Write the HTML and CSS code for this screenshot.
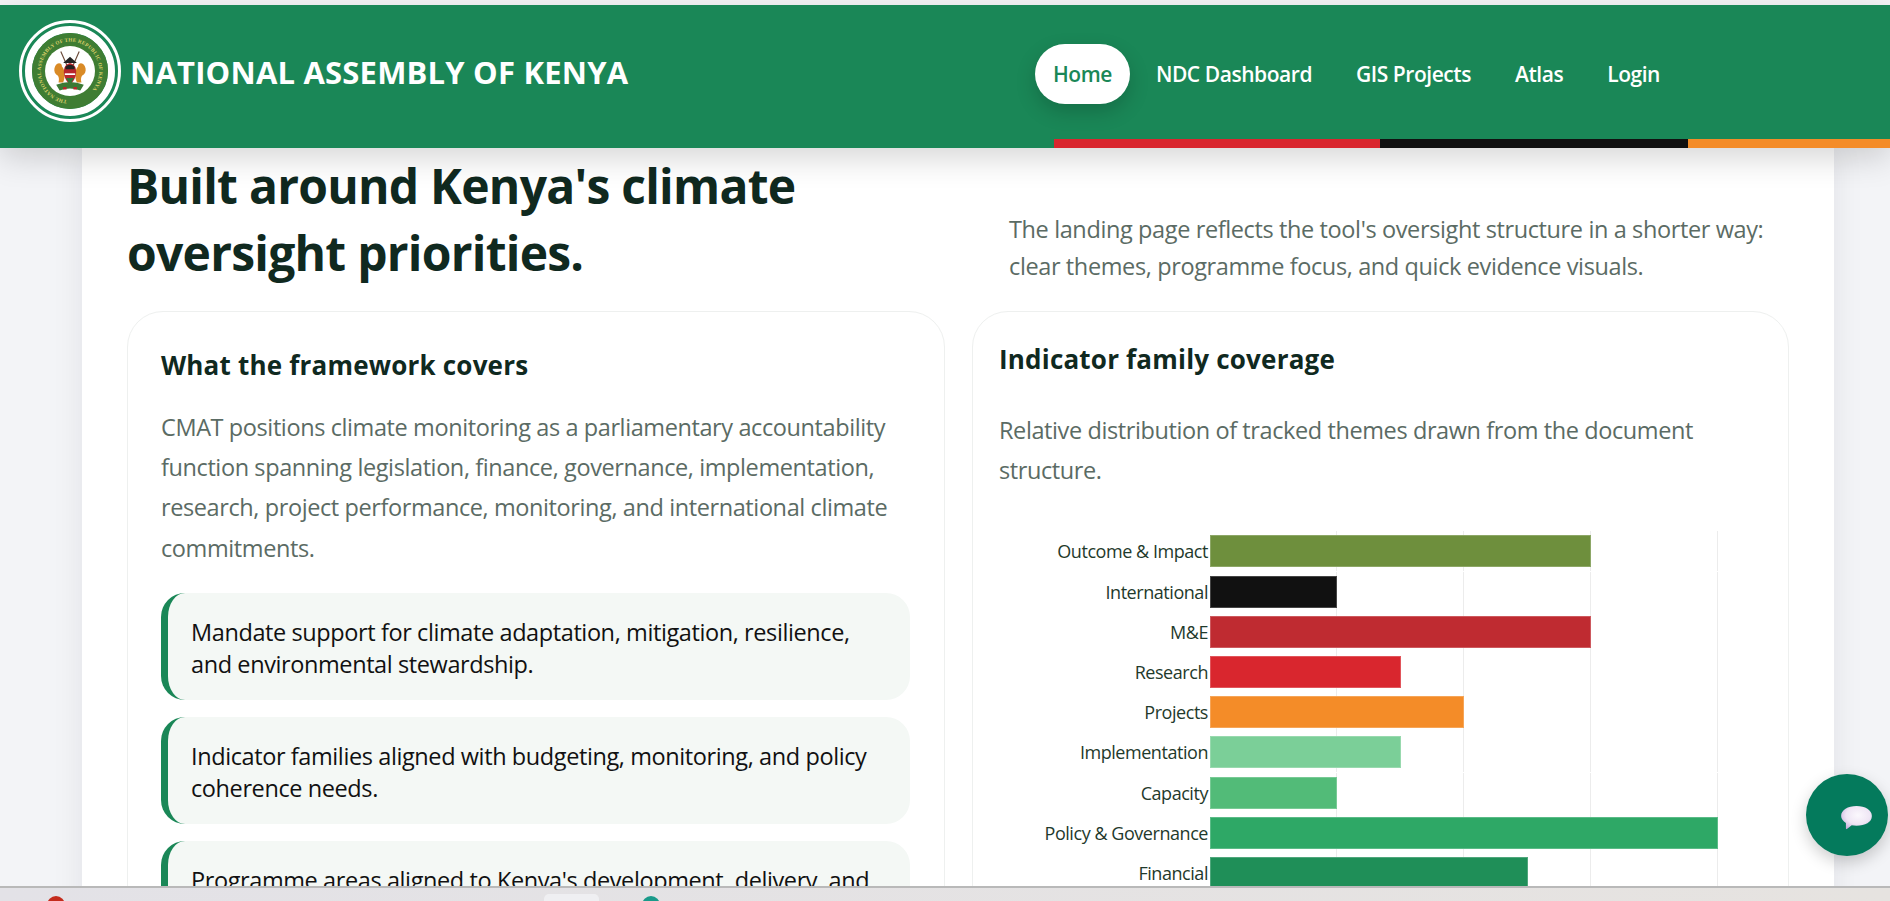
FILE: index.html
```html
<!DOCTYPE html>
<html lang="en">
<head>
  <meta charset="UTF-8" />
  <title>National Assembly of Kenya</title>
  <link rel="stylesheet" href="styles.css">
</head>
<body>
  <div class="top-strip"></div>

  <header class="site-header">
    <div class="brand">
      <svg class="logo" viewBox="0 0 102 102">
        <circle cx="51" cy="51" r="49.5" fill="none" stroke="#fff" stroke-width="3" />
        <circle cx="51" cy="51" r="41.5" fill="none" stroke="#fff" stroke-width="7" />
        <circle cx="51" cy="51" r="38" fill="#3f7d33" />
        <circle cx="51" cy="51" r="25" fill="#fff" />
        <path id="sealText" d="M48 80.300A29.500 29.500 0 0 1 51 21.500A29.500 29.500 0 0 1 54 80.300" fill="none" />
        <text class="seal-text"><textPath href="#sealText">THE NATIONAL ASSEMBLY OF THE REPUBLIC OF KENYA</textPath></text>
        <g transform="translate(51 51) scale(1.15) translate(-51 -50)">
          <path d="M43 33L50 49M59 33L52 49" stroke="#6b4a3a" stroke-width="1" />
          <path d="M45 43L51 37.500L57 43Z" fill="#222" />
          <path d="M38 46C40 42 44 43 44 46C47 49 47 55 45 60L41 60C42 56 41 54 39 53C37 51 37 48 38 46Z" fill="#d98a26" />
          <path d="M64 46C62 42 58 43 58 46C55 49 55 55 57 60L61 60C60 56 61 54 63 53C65 51 65 48 64 46Z" fill="#d98a26" />
          <path d="M51 43C56 44 57 49 56 54C55 58 53 60 51 62C49 60 47 58 46 54C45 49 46 44 51 43Z" fill="#b8262c" />
          <path d="M47 46.500C49 44 53 44 55 46.500L55 48.500L47 48.500Z" fill="#222" />
          <path d="M46.500 52H55.500V53.500H46.500Z" fill="#fff" />
          <path d="M47.500 56H54.500L51 62Z" fill="#2f7a3a" />
          <path d="M39 62Q51 57 63 62L60 67Q51 63.500 42 67Z" fill="#3c7a35" />
          <path d="M45 64H48V66H45ZM54 64H57V66H54Z" fill="#b8262c" />
        </g>
      </svg>
      <h1>NATIONAL ASSEMBLY OF KENYA</h1>
    </div>
    <nav class="main-nav">
      <a class="active" href="#">Home</a>
      <a href="#">NDC Dashboard</a>
      <a href="#">GIS Projects</a>
      <a href="#">Atlas</a>
      <a href="#">Login</a>
    </nav>
    <div class="flag-bar">
      <span class="flag-red"></span>
      <span class="flag-black"></span>
      <span class="flag-orange"></span>
    </div>
  </header>

  <main class="page">
    <section class="sheet">
      <div class="section-head">
        <h2>Built around Kenya's climate<br>oversight priorities.</h2>
        <p>The landing page reflects the tool's oversight structure in a shorter way: clear themes, programme focus, and quick evidence visuals.</p>
      </div>

      <div class="cards">
        <article class="card card-left">
          <h3>What the framework covers</h3>
          <p class="lead">CMAT positions climate monitoring as a parliamentary accountability function spanning legislation, finance, governance, implementation, research, project performance, monitoring, and international climate commitments.</p>
          <div class="point">Mandate support for climate adaptation, mitigation, resilience, and environmental stewardship.</div>
          <div class="point">Indicator families aligned with budgeting, monitoring, and policy coherence needs.</div>
          <div class="point">Programme areas aligned to Kenya's development, delivery, and reporting.</div>
        </article>

        <article class="card card-right">
          <h3>Indicator family coverage</h3>
          <p class="lead">Relative distribution of tracked themes drawn from the document structure.</p>
          <div class="chart">
            <div class="chart-row"><span class="chart-label">Outcome &amp; Impact</span><div class="chart-track"><div class="bar bar-olive" style="width: 75%"></div></div></div>
            <div class="chart-row"><span class="chart-label">International</span><div class="chart-track"><div class="bar bar-black" style="width: 25%"></div></div></div>
            <div class="chart-row"><span class="chart-label">M&amp;E</span><div class="chart-track"><div class="bar bar-maroon" style="width: 75%"></div></div></div>
            <div class="chart-row"><span class="chart-label">Research</span><div class="chart-track"><div class="bar bar-red" style="width: 37.500%"></div></div></div>
            <div class="chart-row"><span class="chart-label">Projects</span><div class="chart-track"><div class="bar bar-orange" style="width: 50%"></div></div></div>
            <div class="chart-row"><span class="chart-label">Implementation</span><div class="chart-track"><div class="bar bar-mint" style="width: 37.500%"></div></div></div>
            <div class="chart-row"><span class="chart-label">Capacity</span><div class="chart-track"><div class="bar bar-light" style="width: 25%"></div></div></div>
            <div class="chart-row"><span class="chart-label">Policy &amp; Governance</span><div class="chart-track"><div class="bar bar-green" style="width: 100%"></div></div></div>
            <div class="chart-row"><span class="chart-label">Financial</span><div class="chart-track"><div class="bar bar-dark" style="width: 62.500%"></div></div></div>
          </div>
        </article>
      </div>
    </section>

    <button class="chat-btn" aria-label="Chat">
      <svg viewBox="0 0 34 26" width="33" height="25">
        <defs>
          <radialGradient id="bubble" cx="55%" cy="40%" r="65%">
            <stop offset="0" stop-color="#fbf8fd" />
            <stop offset="0.6" stop-color="#efe6f5" />
            <stop offset="1" stop-color="#c9b0dc" />
          </radialGradient>
        </defs>
        <path d="M17 1C26 1 33 5 33 11.500C33 18 26 21.500 17 21.500C15 21.500 13.500 21.300 12 21L7 25C6.500 25.300 6 25 6 24.300L6 18.700C3 16.800 1 14.500 1 11.500C1 5 8 1 17 1Z" fill="url(#bubble)" />
      </svg>
    </button>
  </main>

  <footer class="taskbar">
    <span class="task-red"></span>
    <span class="task-box"></span>
    <span class="task-teal"></span>
  </footer>
</body>
</html>
```

FILE: styles.css
```css
* { box-sizing: border-box; }

html, body {
  height: 100%;
}

body {
  margin: 0;
  display: flex;
  flex-direction: column;
  overflow: hidden;
  font-family: "Open Sans", "Noto Sans", sans-serif;
  background-color: #f3f4f7;
}

.top-strip {
  height: 5px;
  flex: none;
  background: #f4f4f6;
}

/* header */

.site-header {
  position: relative;
  z-index: 2;
  height: 143px;
  flex: none;
  display: flex;
  align-items: center;
  justify-content: space-between;
  padding: 0 212px 7px 19px;
  background-color: #1a8757;
  box-shadow: 0 10px 30px rgba(0,0,0,0.16);
}

.brand {
  display: flex;
  align-items: center;
  gap: 9px;
  margin-top: -4px;
}

.logo {
  width: 102px;
  height: 102px;
}

.seal-text {
  font-family: "Liberation Serif", serif;
  font-size: 5.2px;
  font-weight: bold;
  letter-spacing: 0.2px;
  fill: #dcd06a;
}

.brand h1 {
  margin: 2px 0 0;
  color: white;
  font-size: 31px;
  font-weight: 700;
  letter-spacing: 0.2px;
}

.main-nav {
  display: flex;
  align-items: center;
  gap: 8px;
  margin-top: 1px;
}

.main-nav a {
  height: 60px;
  display: flex;
  align-items: center;
  padding: 0 18px;
  border-radius: 30px;
  color: white;
  font-size: 21px;
  font-weight: 600;
  letter-spacing: -0.45px;
  text-decoration: none;
}

.main-nav a.active {
  background: white;
  color: #1a8757;
  box-shadow: 0 8px 20px rgba(0,0,0,0.18);
}

.flag-bar {
  position: absolute;
  right: 0;
  bottom: 0;
  display: flex;
  height: 9px;
}

.flag-red { width: 326px; background: #d9262e; }
.flag-black { width: 308px; background: #111; }
.flag-orange { width: 202px; background: #f48c28; }

/* page */

.page {
  flex: 1;
  min-height: 0;
  overflow: hidden;
  padding: 0 56px 0 82px;
}

.sheet {
  padding: 5px 45px 0;
  background: white;
  box-shadow: 0 0 30px rgba(20,30,40,0.08);
}

.section-head {
  display: flex;
  justify-content: space-between;
  align-items: flex-end;
  margin-bottom: 25px;
}

.section-head h2 {
  margin: 0;
  color: #10291f;
  font-size: 48px;
  line-height: 66.5px;
  font-weight: 700;
  letter-spacing: -0.75px;
}

.section-head p {
  width: 780px;
  margin: 0 0 1px;
  color: #5b6b64;
  font-size: 23.5px;
  line-height: 37px;
  letter-spacing: -0.38px;
}

.cards {
  display: grid;
  grid-template-columns: 818px 817px;
  gap: 27px;
}

.card {
  border: 1px solid #eef0ef;
  border-radius: 36px;
  background: white;
}

.card h3 {
  margin: 0;
  color: #10291f;
  font-size: 26px;
  font-weight: 700;
  letter-spacing: 0.2px;
}

.lead {
  margin: 0;
  color: #5b6b64;
  font-size: 23.5px;
  line-height: 40.2px;
  letter-spacing: -0.4px;
}

.card-left {
  padding: 35px 34px 30px 33px;
}

.card-left .lead {
  margin: 24px 0 25px;
}

.card-right {
  padding: 29px 33px 30px 26px;
}

.card-right .lead {
  margin-top: 33px;
}

.point {
  height: 107px;
  margin-bottom: 17px;
  padding: 23px 24px 0 23px;
  border-left: 7px solid #1a8757;
  border-radius: 24px;
  background: #f4f8f5;
  color: #111;
  font-size: 23.5px;
  line-height: 32px;
  letter-spacing: -0.4px;
}

/* chart */

.chart {
  margin-top: 45px;
  display: flex;
  flex-direction: column;
  gap: 8.2px;
}

.chart-row {
  display: flex;
  align-items: stretch;
  height: 32px;
}

.chart-label {
  width: 211px;
  padding-right: 2px;
  color: #1f3a2c;
  font-size: 18px;
  line-height: 32px;
  letter-spacing: -0.45px;
  text-align: right;
  white-space: nowrap;
}

.chart-track {
  width: 508px;
  margin: -4px 0;
  padding: 4px 0;
  background-image: repeating-linear-gradient(to right, transparent 0, transparent 126px, #ececec 126px, #ececec 127px);
}

.bar {
  height: 100%;
  box-shadow: inset 0 0 0 1px rgba(255,255,255,0.22);
}

.bar-olive { background: #6e8f3d; }
.bar-black { background: #111; }
.bar-maroon { background: #bf2b31; }
.bar-red { background: #d9262e; }
.bar-orange { background: #f48c28; }
.bar-mint { background: #7bcf98; }
.bar-light { background: #52bb78; }
.bar-green { background: #2ea866; }
.bar-dark { background: #1f8f58; }

/* chat */

.chat-btn {
  position: absolute;
  left: 1806px;
  top: 774px;
  z-index: 3;
  width: 82px;
  height: 82px;
  display: flex;
  align-items: flex-start;
  justify-content: flex-start;
  padding: 31px 0 0 34px;
  border: none;
  border-radius: 50%;
  background: #047a5c;
  box-shadow: 0 6px 16px rgba(0,0,0,0.2);
}

/* os taskbar */

.taskbar {
  height: 15px;
  flex: none;
  display: flex;
  align-items: flex-start;
  overflow: hidden;
  padding: 6px 0 0 47px;
  border-top: 2px solid #b9b9b9;
  background: linear-gradient(to right, #e3e2e7, #e6e3e0);
}

.task-red {
  width: 18px;
  height: 18px;
  margin-top: 2px;
  border-radius: 50%;
  background: #c42b1c;
}

.task-box {
  width: 55px;
  height: 18px;
  margin-left: 479px;
  border-radius: 5px;
  background: #efeff2;
}

.task-teal {
  width: 18px;
  height: 18px;
  margin-top: 2px;
  margin-left: 43px;
  border-radius: 50%;
  background: #1a9a8a;
}
```
